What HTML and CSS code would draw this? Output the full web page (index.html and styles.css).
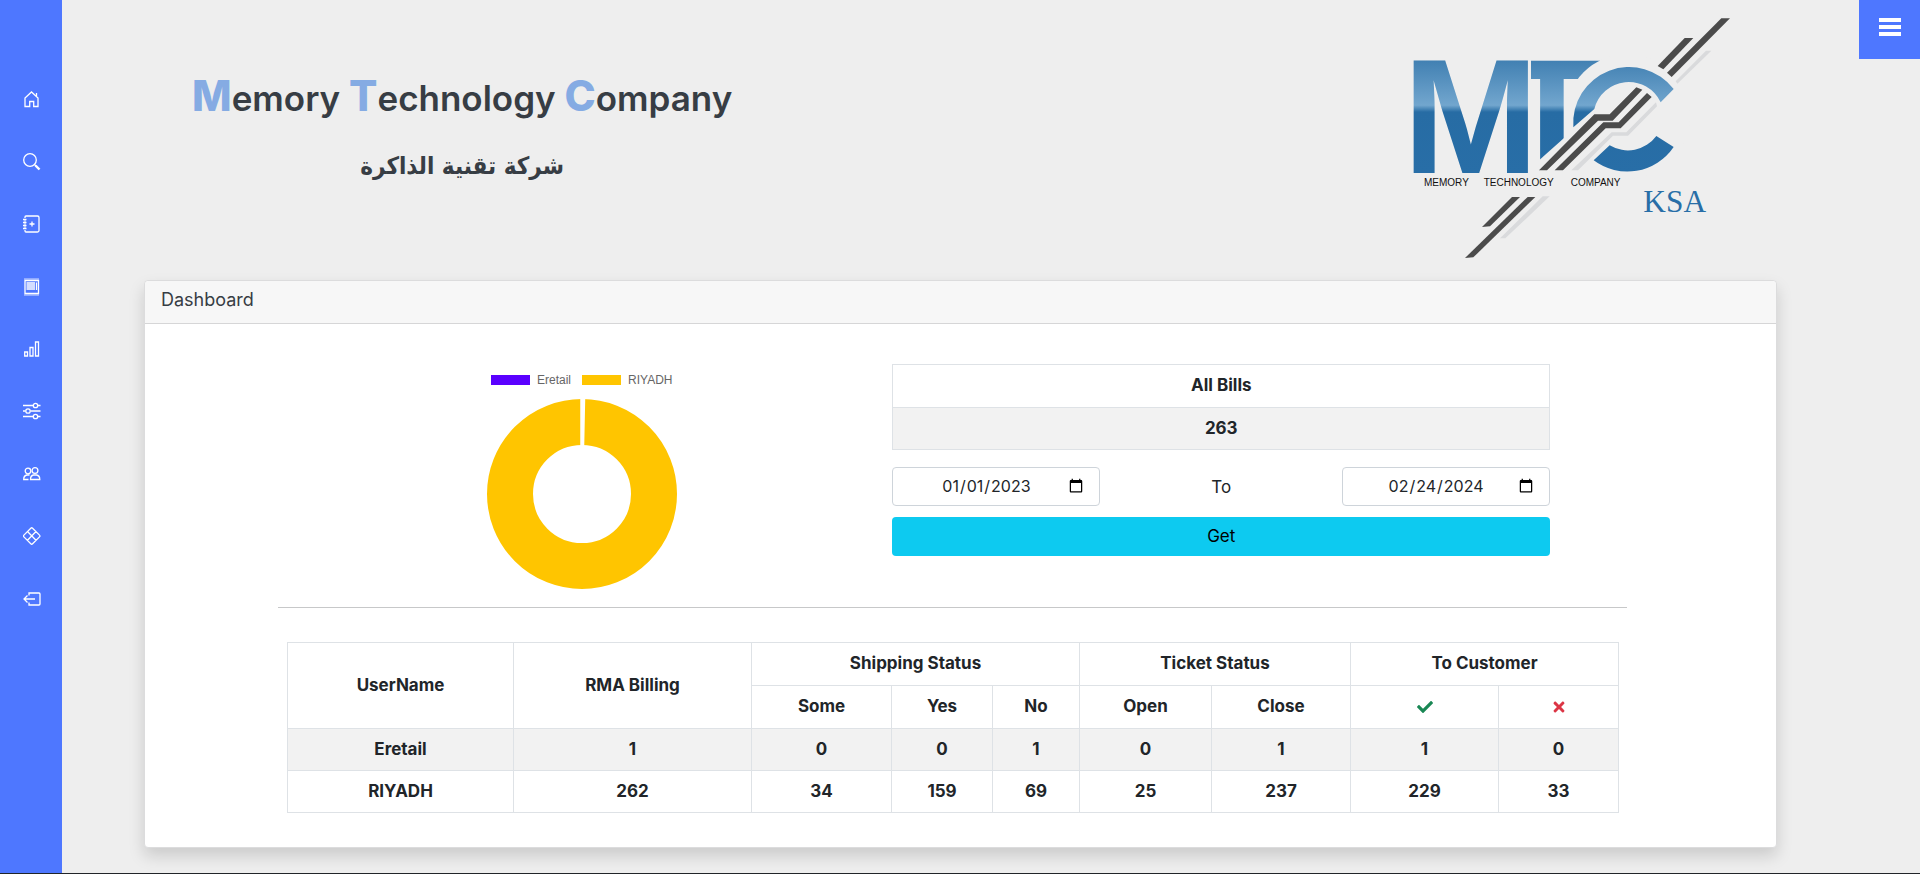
FILE: index.html
```html
<!DOCTYPE html>
<html lang="en">
<head>
<meta charset="utf-8">
<title>Dashboard</title>
<link rel="stylesheet" href="styles.css">
</head>
<body>
<div class="layout">
  <nav class="sidebar" aria-label="Main">
    <ul class="menu">
      <li><a href="#" aria-label="Home"><svg class="icon" viewBox="0 0 18 18"><path d="M2 16.5V8L8.5 2 15 8v8.500h-4.300V11.500H6.700v5zM13.500 6V3"/></svg></a></li>
      <li><a href="#" aria-label="Search"><svg class="icon" viewBox="0 0 18 18"><circle cx="7" cy="7" r="6.300"/><path d="M11.500 11.500 13 13"/><path class="bold" d="M12.500 12.500 16.500 16.500"/></svg></a></li>
      <li><a href="#" aria-label="New bill"><svg class="icon" viewBox="0 0 18 18"><path d="M2 3V2Q2 1 3 1H14.500Q16 1 16 2.500V15.500Q16 17 14.500 17H3Q2 17 2 16V15M2 5.500v1M2 8.500v1M2 11.500v1M0 4.500h3.500M0 7.500h3.500M0 10.500h3.500M0 13.500h3.500M9 6.500v5M6.500 9h5"/></svg></a></li>
      <li><a href="#" aria-label="Bills"><svg class="icon" viewBox="0 0 18 18"><path d="M2 2.500H15.500V15.500H2z"/><path stroke-dasharray="1 1" d="M1.500 1H16M1.500 17H16"/><path d="M3.500 5H12M3.500 7H12M3.500 9H12M3.500 11H12M13.500 4.500V12"/></svg></a></li>
      <li><a href="#" aria-label="Statistics"><svg class="icon" viewBox="0 0 18 18"><path d="M1.700 12H4.500V16H1.700zM7 7.500h3V16H7zM12.500 2h3V16h-3z"/></svg></a></li>
      <li><a href="#" aria-label="Settings"><svg class="icon" viewBox="0 0 18 18"><path d="M0 3.500H10M15 3.500h2.500M0 9H2.500M7.500 9H17.500M0 14.500H10M15 14.500h2.500"/><circle cx="12.500" cy="3.500" r="2.200"/><circle cx="5" cy="9" r="2.200"/><circle cx="12.500" cy="14.500" r="2.200"/></svg></a></li>
      <li><a href="#" aria-label="Users"><svg class="icon" viewBox="0 0 18 18"><circle cx="5" cy="6" r="2.800"/><circle cx="12" cy="5.500" r="2.900"/><path d="M5.500 14.500H.700Q.700 10.500 4 10h2.500M7.500 14.500Q7.500 10.500 10.500 10h3Q16.800 10.500 16.800 14.500z"/></svg></a></li>
      <li><a href="#" aria-label="Modules"><svg class="icon" viewBox="0 0 18 18"><path d="M7.800 1.200Q8.700.300 9.600 1.200L16.500 8.100Q17.400 9 16.500 9.900L9.600 16.800Q8.700 17.700 7.800 16.800L.900 9.900Q0 9 .900 8.100zM4.500 4.500 13 13.300M13 4.500 4.500 13.300"/></svg></a></li>
      <li><a href="#" aria-label="Log out"><svg class="icon" viewBox="0 0 18 18"><path d="M6 5.500V3H16Q17 3 17 4V14Q17 15 16 15H6V12.500M12 9H1M4.500 5.500 1 9 4.500 12.500"/></svg></a></li>
    </ul>
  </nav>

  <main class="main">
    <header class="banner">
      <div class="brand">
        <h1 class="brand-name"><span class="cap">M</span>emory <span class="cap">T</span>echnology <span class="cap">C</span>ompany</h1>
        <h2 class="brand-arabic" lang="ar" dir="rtl">شركة تقنية الذاكرة</h2>
      </div>
      <svg class="logo" viewBox="30 50 960 726" role="img" aria-label="Memory Technology Company KSA">
        <defs>
          <linearGradient id="steel" gradientUnits="userSpaceOnUse" x1="0" y1="180" x2="0" y2="517">
            <stop offset="0" stop-color="#4180b2"/>
            <stop offset=".4" stop-color="#72a6ce"/>
            <stop offset=".46" stop-color="#276ca4"/>
            <stop offset="1" stop-color="#286ea7"/>
          </linearGradient>
        </defs>
        <text class="logo-letter" x="303" y="517" fill="url(#steel)">T</text>
        <path fill="#eee" d="M300 170H390V530H300z"/>
        <text class="logo-letter" x="5" y="517" fill="url(#steel)">M</text>
        <circle cx="680" cy="348" r="187" fill="#eee"/>
        <path fill="#eee" d="M405 488 500 403 530 530H405z"/>
        <g fill="url(#steel)">
          <path d="M517 381A168 168 0 0 1 818 266L779 306A106 106 0 0 0 580 326z"/>
          <path d="M578 480A168 168 0 0 0 818 440L766 407A106 106 0 0 1 626 435z"/>
        </g>
        <g fill="#d9dadc">
          <path d="M511 510 632 396H676L765 306 768 318 681 406H636L531 510z"/>
          <path d="M824 243 915 151H931L829 250z"/>
          <path d="M297 714 425 588H446L313 714z"/>
        </g>
        <g fill="#4b4b4b">
          <path d="M414 510 580 342H626L706 261 724 268 635 361H591L438 510z"/>
          <path d="M461 510 607 366H653L738 278 752 290 659 384H614L486 510z"/>
          <path d="M770 197 851 113H877L787 207z"/>
          <path d="M798 217 961 54H987L812 230z"/>
          <path d="M243 680 333 590H357L267 678z"/>
          <path d="M192 773 380 590H403L217 771z"/>
        </g>
        <g class="logo-tag">
          <text x="69" y="558">MEMORY</text>
          <text x="248" y="558">TECHNOLOGY</text>
          <text x="509" y="558">COMPANY</text>
        </g>
        <text class="logo-ksa" x="727" y="636">KSA</text>
      </svg>
    </header>

    <section class="card">
      <div class="card-header">Dashboard</div>
      <div class="card-body">
        <div class="summary">
          <figure class="chart">
            <figcaption class="legend">
              <span class="key"><span class="swatch violet"></span>Eretail</span>
              <span class="key"><span class="swatch amber"></span>RIYADH</span>
            </figcaption>
            <svg class="donut" viewBox="0 0 192 192" role="img" aria-label="Eretail 1, RIYADH 262">
              <circle cx="96" cy="96" r="72" fill="none" stroke="#ffc500" stroke-width="46"/>
              <path d="M95.500 0V48M98 0 97 48" stroke="#fff" stroke-width="2.500"/>
            </svg>
          </figure>
          <form class="filter">
            <table class="table">
              <thead><tr><th>All Bills</th></tr></thead>
              <tbody><tr><th>263</th></tr></tbody>
            </table>
            <div class="range">
              <input class="date" type="date" value="2023-01-01" aria-label="From date">
              <span class="to">To</span>
              <input class="date" type="date" value="2024-02-24" aria-label="To date">
            </div>
            <button class="get" type="button">Get</button>
          </form>
        </div>
        <hr class="rule">
        <div class="users">
          <table class="table">
            <colgroup>
              <col class="w-user"><col class="w-rma"><col class="w-some"><col class="w-yes"><col class="w-no"><col class="w-open"><col class="w-close"><col class="w-done"><col class="w-left">
            </colgroup>
            <thead>
              <tr><th rowspan="2">UserName</th><th rowspan="2">RMA Billing</th><th colspan="3">Shipping Status</th><th colspan="2">Ticket Status</th><th colspan="2">To Customer</th></tr>
              <tr><th>Some</th><th>Yes</th><th>No</th><th>Open</th><th>Close</th>
                <th><svg class="mark" viewBox="0 0 512 512" role="img" aria-label="Delivered"><path fill="#198754" d="M173.900 439.400l-166.400-166.400c-10-10-10-26.200 0-36.200l36.200-36.200c10-10 26.200-10 36.200 0L192 312.700 432.100 72.600c10-10 26.200-10 36.200 0l36.200 36.200c10 10 10 26.200 0 36.200l-294.400 294.400c-10 10-26.200 10-36.200 0z"/></svg></th>
                <th><svg class="mark" viewBox="-80 0 512 512" role="img" aria-label="Not delivered"><path fill="#dc3545" d="M242.700 256l100.100-100.100c12.300-12.300 12.300-32.200 0-44.500l-22.200-22.200c-12.300-12.300-32.200-12.300-44.500 0L176 189.300 75.900 89.200c-12.300-12.300-32.200-12.300-44.500 0L9.200 111.500c-12.300 12.300-12.300 32.200 0 44.500L109.300 256 9.200 356.100c-12.300 12.300-12.300 32.200 0 44.500l22.200 22.200c12.300 12.300 32.200 12.300 44.500 0L176 322.700l100.100 100.100c12.300 12.300 32.200 12.300 44.500 0l22.200-22.200c12.300-12.300 12.300-32.200 0-44.500L242.700 256z"/></svg></th></tr>
            </thead>
            <tbody>
              <tr><th>Eretail</th><th>1</th><th>0</th><th>0</th><th>1</th><th>0</th><th>1</th><th>1</th><th>0</th></tr>
              <tr><th>RIYADH</th><th>262</th><th>34</th><th>159</th><th>69</th><th>25</th><th>237</th><th>229</th><th>33</th></tr>
            </tbody>
          </table>
        </div>
      </div>
    </section>
  </main>
</div>
<footer class="footer"></footer>
<button class="burger" type="button" aria-label="Menu"><svg class="burger-icon" viewBox="0 0 22 18"><path d="M0 2H22M0 9H22M0 16H22" stroke="#fff" stroke-width="4"/></svg></button>
</body>
</html>
```
FILE: styles.css
```css
* { box-sizing: border-box; }

body {
  margin: 0;
  min-height: 100vh;
  display: flex;
  flex-direction: column;
  background: #eee;
  color: #212529;
  font: 17px/24px Inter, "Open Sans", sans-serif;
}

.layout { flex: 1; display: flex; }

.sidebar { flex: none; width: 62px; background: #4e77ff; }
.menu {
  list-style: none;
  margin: 0;
  padding: 68px 0 0 2px;
  height: 630px;
  display: grid;
  grid-auto-rows: 1fr;
}
.menu a { height: 100%; display: flex; align-items: center; justify-content: center; }
.icon { width: 18px; height: 18px; fill: none; stroke: #fff; stroke-width: 1.3; }
.icon .bold { stroke-width: 2.4; }

.burger {
  position: absolute;
  top: 0;
  right: 0;
  width: 61px;
  height: 59px;
  padding: 0 0 5px;
  border: 0;
  background: #4e77ff;
  display: flex;
  align-items: center;
  justify-content: center;
}
.burger-icon { width: 22px; height: 18px; }

.main { flex: 1; padding: 0 144px 25px 82px; }

.banner {
  display: flex;
  justify-content: space-between;
  align-items: flex-start;
  padding: 17px 46px 21px 48px;
}
.brand { color: #373d44; text-align: center; padding-top: 49px; }
.brand-name { margin: 0; font-size: 35px; line-height: 60px; font-weight: 600; }
.brand-name .cap { font-size: 42px; font-weight: 800; color: #85abe3; }
.brand-arabic { margin: 16px 0 0; font: bold 24px/44px "DejaVu Sans Condensed", "DejaVu Sans", sans-serif; }

.logo { display: block; width: 320px; height: 242px; }
.logo-letter { font: bold 490px "Liberation Sans", Arial, sans-serif; }
.logo-tag { font: 30px "Liberation Sans", Arial, sans-serif; fill: #111; }
.logo-ksa { font: 94px "Liberation Serif", serif; fill: #286ea7; }

.card {
  border: 1px solid #dcdcdd;
  border-radius: 4px;
  background: #fff;
  box-shadow: 0 8px 16px rgba(0, 0, 0, .15);
}
.card-header {
  padding: 7px 16px 11px;
  border-bottom: 1px solid #d6d6d7;
  border-radius: 4px 4px 0 0;
  background: #f7f7f7;
  color: #373d44;
  font-size: 18px;
}
.card-body { padding: 40px 149px 34px 133px; }

.summary { display: grid; grid-template-columns: 606fr 657fr; gap: 8px; padding-right: 77px; }

.chart { margin: 0; padding-left: 1px; display: flex; flex-direction: column; align-items: center; }
.legend {
  display: flex;
  gap: 11px;
  padding-top: 8px;
  font: 12px/16px "Liberation Sans", Arial, sans-serif;
  color: #666;
}
.key { display: flex; align-items: center; gap: 7px; }
.swatch { width: 39px; height: 10px; }
.violet { background: #5a00ff; }
.amber { background: #ffc500; }
.donut { width: 192px; height: 192px; margin-top: 10px; }

.table { width: 100%; border-collapse: collapse; text-align: center; }
.table th { height: 43px; padding: 7px 8px 9px; border: 1px solid #dee2e6; font-weight: 700; line-height: 24px; }
.table tbody th { height: 42px; }
.table tbody tr:nth-child(odd) { background: #f2f2f2; }

.range { display: flex; justify-content: space-between; align-items: center; margin-top: 17px; }
.date {
  width: 208px;
  height: 39px;
  padding: 5px 13px 7px;
  border: 1px solid #ced4da;
  border-radius: 4px;
  background: #fff;
  color: #212529;
  font: 16px/24px Inter, sans-serif;
  text-align: center;
}
.get {
  width: 100%;
  height: 39px;
  margin-top: 11px;
  padding: 5px 13px 7px;
  border: 0;
  border-radius: 4px;
  background: #0dcaf0;
  color: #000;
  font: 17px/24px Inter, sans-serif;
}

.rule { margin: 17px 0 0; border: 0; border-top: 1px solid #c7c8c9; }

.users { padding: 34px 8px 0 9px; }
.users .table { table-layout: fixed; }
.w-user { width: 226px; }
.w-rma { width: 238px; }
.w-some { width: 140px; }
.w-yes { width: 101px; }
.w-no { width: 87px; }
.w-open { width: 132px; }
.w-close { width: 139px; }
.w-done { width: 148px; }
.w-left { width: 120px; }
.mark { width: 16px; height: 16px; display: inline-block; vertical-align: middle; }

.footer { height: 2px; background: #212529; }
```
